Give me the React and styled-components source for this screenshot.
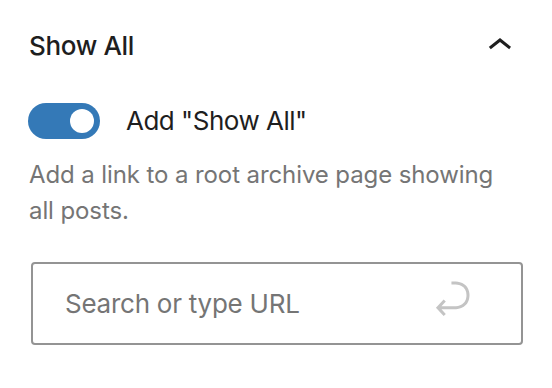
import React from "react";
import styled, { createGlobalStyle } from "styled-components";

const Global = createGlobalStyle`
  html, body { margin: 0; padding: 0; background: #fff; }
  body { font-family: Inter, "Noto Sans", sans-serif; -webkit-font-smoothing: antialiased; }
  * { box-sizing: border-box; }
`;

const Panel = styled.section`
  width: 552px;
  padding: 22px 28px 0 29px;
`;

const Header = styled.div`
  display: flex;
  align-items: center;
  justify-content: space-between;
  height: 48px;
`;

const Title = styled.h2`
  margin: 0;
  font-size: 26px;
  line-height: 48px;
  font-weight: 500;
  letter-spacing: -0.35px;
  color: #1e1e1e;
`;

const IconButton = styled.button`
  border: 0;
  background: none;
  padding: 0;
  width: 48px;
  height: 48px;
  display: flex;
  align-items: center;
  justify-content: center;
  color: ${(p) => p.$color || "#1e1e1e"};
  svg { display: block; }
`;

const ToggleRow = styled.label`
  display: flex;
  align-items: center;
  gap: 26px;
  margin-top: 33px;
  margin-left: -1px;
`;

const Track = styled.span`
  position: relative;
  flex: none;
  width: 72px;
  height: 36px;
  border-radius: 18px;
  background: ${(p) => (p.$on ? "#3479b7" : "#fff")};
`;

const Thumb = styled.span`
  position: absolute;
  top: 6px;
  left: ${(p) => (p.$on ? "42px" : "6px")};
  width: 24px;
  height: 24px;
  border-radius: 50%;
  background: #fff;
`;

const ToggleLabel = styled.span`
  font-size: 26px;
  line-height: 36px;
  letter-spacing: -0.5px;
  color: #1e1e1e;
`;

const Help = styled.p`
  margin: 18px 0 0;
  font-size: 24px;
  line-height: 36px;
  letter-spacing: -0.1px;
  color: #757575;
`;

const Field = styled.div`
  display: flex;
  align-items: center;
  margin-top: 33px;
  margin-left: 2px;
  width: 492px;
  height: 83px;
  border: 2px solid #949494;
  border-radius: 4px;
  padding-left: 32px;
`;

const Input = styled.input`
  flex: 1;
  min-width: 0;
  border: 0;
  outline: none;
  background: transparent;
  font-family: inherit;
  font-size: 26px;
  letter-spacing: -0.25px;
  color: #1e1e1e;
  padding: 0;
  &::placeholder { color: #757575; }
`;

const SubmitSlot = styled.span`
  margin-right: 45px;
  margin-bottom: 12px;
`;

export default function App() {
  return (
    <>
      <Global />
      <Panel>
        <Header>
          <Title>Show All</Title>
          <IconButton aria-label="Collapse">
            <svg width="48" height="48" viewBox="0 0 24 24" fill="currentColor">
              <path d="M6.5 12.4L12 8l5.5 4.4-.9 1.2L12 10l-4.6 3.6-1-1.2z" />
            </svg>
          </IconButton>
        </Header>
        <ToggleRow>
          <Track $on>
            <Thumb $on />
          </Track>
          <ToggleLabel>Add "Show All"</ToggleLabel>
        </ToggleRow>
        <Help>Add a link to a root archive page showing all posts.</Help>
        <Field>
          <Input placeholder="Search or type URL" />
          <SubmitSlot>
            <IconButton as="span" $color="#c4c4c4" aria-label="Submit">
              <svg width="48" height="48" viewBox="0 0 24 24" fill="currentColor">
                <path d="M6.734 16.106l2.176-2.38-1.093-1.028-3.846 4.158 3.846 4.157 1.093-1.027-2.176-2.38h2.811c1.125 0 2.25.03 3.374 0 1.428-.001 3.362-.25 4.963-1.277 1.66-1.065 2.868-2.906 2.868-5.859 0-2.479-1.327-4.896-3.65-5.93-1.82-.813-3.044-.8-4.806-.788l-.567.002v1.5c.184 0 .368 0 .553-.002 1.82-.007 2.704-.014 4.21.657 1.854.827 2.76 2.657 2.76 4.561 0 2.472-.973 3.824-2.178 4.596-1.258.807-2.864 1.04-4.163 1.04h-.02c-1.115.03-2.229 0-3.344 0H6.734z" />
              </svg>
            </IconButton>
          </SubmitSlot>
        </Field>
      </Panel>
    </>
  );
}
